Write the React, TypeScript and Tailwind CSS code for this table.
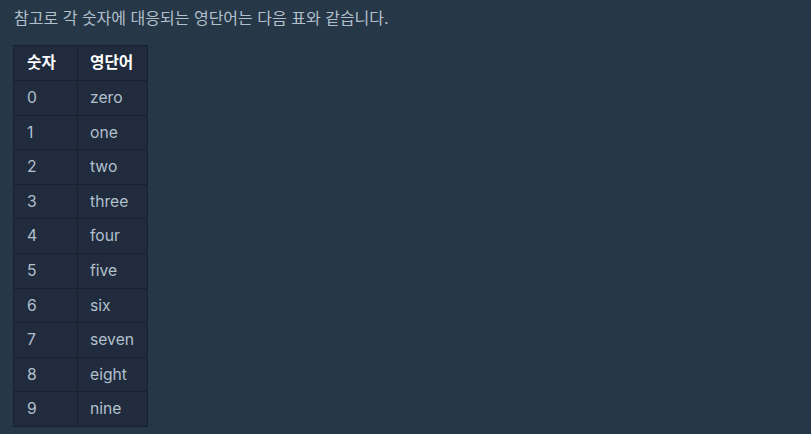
const rows = ['zero', 'one', 'two', 'three', 'four', 'five', 'six', 'seven', 'eight', 'nine'];

export default function App() {
  return (
    <div
      className="min-h-[434px] w-full bg-[#263747] px-[14px] pt-[6px] text-[#b2c0cc]"
      style={{ fontFamily: 'Inter, "Noto Sans CJK KR", sans-serif' }}
    >
      <p className="text-[16px] leading-[24px]">참고로 각 숫자에 대응되는 영단어는 다음 표와 같습니다.</p>
      <table className="mt-[15px] -ml-px border-collapse bg-[#202b3d] text-[15.7px]">
        <thead>
          <tr>
            <th className="w-[64px] border border-[#172130] px-[13px] py-[5px] text-left font-bold leading-[24px] text-white">숫자</th>
            <th className="w-[70px] border border-[#172130] px-[12px] py-[5px] text-left font-bold leading-[24px] text-white">영단어</th>
          </tr>
        </thead>
        <tbody>
          {rows.map((w, i) => (
            <tr key={i}>
              <td className="border border-[#172130] px-[13px] py-[5px] leading-[23.6px]">{i}</td>
              <td className="border border-[#172130] px-[12px] py-[5px] leading-[23.6px]">{w}</td>
            </tr>
          ))}
        </tbody>
      </table>
    </div>
  );
}
